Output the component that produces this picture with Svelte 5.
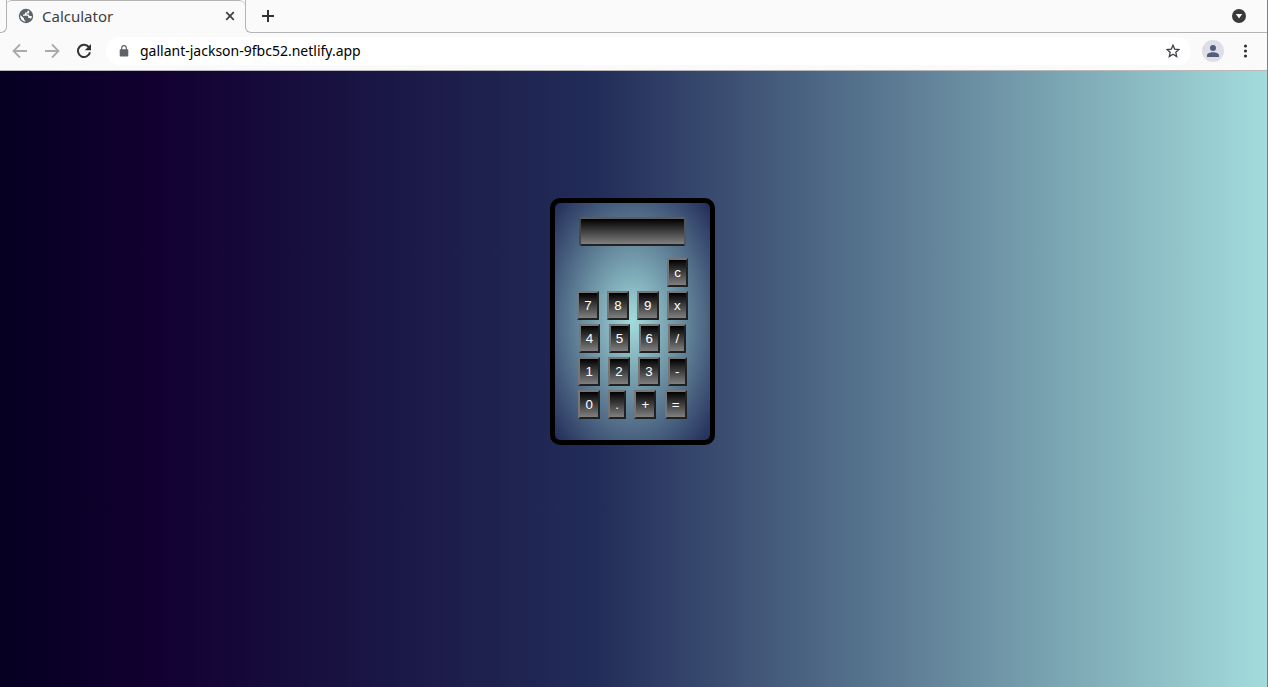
<script>
  const rows = [
    ['7', '8', '9', 'x'],
    ['4', '5', '6', '/'],
    ['1', '2', '3', '-'],
    ['0', '.', '+', '='],
  ];
  let display = $state('');
  let address = $state('gallant-jackson-9fbc52.netlify.app');

  function press(key) {
    if (key !== '=') {
      display += key;
      return;
    }
    const match = display.match(/^(-?[\d.]+)([x/+-])(-?[\d.]+)$/);
    if (!match) return;
    const a = Number(match[1]);
    const b = Number(match[3]);
    const results = { x: a * b, '/': a / b, '+': a + b, '-': a - b };
    display = String(results[match[2]]);
  }
</script>

<div class="window">
  <header>
    <div class="tabs">
      <div class="edge"></div>
      <div class="tab">
        <svg width="16" height="16" viewBox="0 0 16 16" aria-hidden="true">
          <circle cx="8" cy="8" r="7.2" fill="#5f6368" />
          <path d="M9.6 2.3 L9.6 3.2 C9.6 4 9 4.6 8.2 4.6 H7 V5.6 C7 6.2 6.6 6.5 6 6.5 H5 V7.8 H9 C9.8 7.8 10.2 8.3 10.2 9 V10 H11 C12 10 12.4 10.4 12.8 11 C13.6 10 13.9 9 13.9 8 H12 C11 8 10.9 7.2 10.9 6.5 H8.6 V5.6 H10 C11 5.6 11.3 5 11.3 3.2 Z M2.2 7 C1.9 9.8 3.6 13 7.3 13.7 V12.4 C6.5 12.4 6 11.8 6 11 V10.3 Z" fill="#fafafa" />
        </svg>
        <span class="title">Calculator</span>
        <button class="icon close" aria-label="Close tab">
          <svg width="10" height="10" viewBox="0 0 10 10"><path d="M1.2 1.2 L8.8 8.8 M8.8 1.2 L1.2 8.8" stroke="#3c4043" stroke-width="1.7" /></svg>
        </button>
      </div>
      <div class="strip">
        <button class="icon" aria-label="New tab">
          <svg width="12" height="12" viewBox="0 0 12 12"><path d="M6 0 V12 M0 6 H12" stroke="#323232" stroke-width="2" /></svg>
        </button>
        <button class="icon" aria-label="Search tabs">
          <svg width="14" height="14" viewBox="0 0 14 14"><circle cx="7" cy="7" r="7" fill="#3a3a3a" /><path d="M3.8 5 H10.2 L7 9.4 Z" fill="#fafafa" /></svg>
        </button>
      </div>
    </div>
    <div class="toolbar">
      <button class="icon" aria-label="Back">
        <svg width="16" height="16" viewBox="0 0 16 16"><path d="M15 8 H2 M8 1.5 L1.5 8 L8 14.5" fill="none" stroke="#ababab" stroke-width="1.8" /></svg>
      </button>
      <button class="icon" aria-label="Forward">
        <svg width="16" height="16" viewBox="0 0 16 16"><path d="M1 8 H14 M8 1.5 L14.5 8 L8 14.5" fill="none" stroke="#ababab" stroke-width="1.8" /></svg>
      </button>
      <button class="icon" aria-label="Reload">
        <svg width="16" height="16" viewBox="0 0 16 16"><path d="M13.2 4.6 A6.1 6.1 0 1 0 14 9.2" fill="none" stroke="#323232" stroke-width="2" /><path d="M15 1 V7.2 H8.8 Z" fill="#323232" /></svg>
      </button>
      <div class="omnibox">
        <svg width="10" height="12" viewBox="0 0 10 12" aria-hidden="true"><rect x="0.7" y="4.3" width="8.6" height="7.2" rx="0.8" fill="#5f6368" /><path d="M2.7 5 V3 A2.3 2.3 0 0 1 7.3 3 V5" fill="none" stroke="#5f6368" stroke-width="1.2" /></svg>
        <input class="address" aria-label="Address" bind:value={address} spellcheck="false" />
        <button class="icon" aria-label="Bookmark this page">
          <svg width="14" height="14" viewBox="0 0 14 14"><path d="M7 1.2 L8.7 5.1 L13 5.5 L9.8 8.3 L10.7 12.6 L7 10.3 L3.3 12.6 L4.2 8.3 L1 5.5 L5.3 5.1 Z" fill="none" stroke="#3f4347" stroke-width="1.3" /></svg>
        </button>
      </div>
      <button class="icon" aria-label="Profile">
        <svg width="22" height="22" viewBox="0 0 22 22"><circle cx="11" cy="11" r="11" fill="#dedfe6" /><circle cx="11" cy="8" r="3" fill="#545d7b" /><path d="M5 17 V15.2 C5 13.2 8.4 12.2 11 12.2 S17 13.2 17 15.2 V17 Z" fill="#545d7b" /></svg>
      </button>
      <button class="icon" aria-label="Menu">
        <svg width="10" height="14" viewBox="0 0 10 14"><circle cx="5.5" cy="2" r="1.6" fill="#323232" /><circle cx="5.5" cy="7" r="1.6" fill="#323232" /><circle cx="5.5" cy="12" r="1.6" fill="#323232" /></svg>
      </button>
    </div>
  </header>

  <main>
    <div class="calculator">
      <input class="display" aria-label="Display" readonly value={display} />
      <div class="keys">
        <div class="clear"><button class="key" onclick={() => (display = '')}>c</button></div>
        {#each rows as row}
          <div>
            {#each row as key}<button class="key" onclick={() => press(key)}>{key}</button>{' '}{/each}
          </div>
        {/each}
      </div>
    </div>
  </main>
</div>

<style>
  :global(body) {
    margin: 0;
  }
  .window {
    display: flex;
    flex-direction: column;
    min-height: 100vh;
    box-sizing: border-box;
    border-right: 1px solid #7b8080;
    font-family: 'Noto Sans', sans-serif;
  }
  header {
    background: #fafafa;
    border-bottom: 1px solid #b9b9b9;
  }
  .icon {
    display: flex;
    flex: none;
    padding: 0;
    border: 0;
    background: none;
  }
  .tabs {
    display: flex;
    height: 33px;
  }
  .edge {
    width: 7px;
    box-sizing: border-box;
    border-right: 1px solid #b4b4b4;
    border-bottom: 1px solid #b4b4b4;
    border-bottom-right-radius: 6px;
  }
  .tab {
    display: flex;
    align-items: center;
    gap: 8px;
    width: 239px;
    margin-left: -1px;
    padding: 0 10px 2px 12px;
    box-sizing: border-box;
    border-top: 1px solid #b4b4b4;
    border-radius: 6px 6px 0 0;
  }
  .title {
    flex: 1;
    font-size: 15px;
    line-height: 20px;
    color: #3c4043;
  }
  .strip {
    display: flex;
    flex: 1;
    align-items: center;
    justify-content: space-between;
    padding: 0 21px 0 16px;
    border-left: 1px solid #b4b4b4;
    border-bottom: 1px solid #b4b4b4;
    border-bottom-left-radius: 6px;
  }
  .toolbar {
    display: flex;
    align-items: center;
    gap: 16px;
    height: 36px;
    padding: 0 17px 1px 12px;
  }
  .omnibox {
    display: flex;
    flex: 1;
    align-items: center;
    height: 28px;
    margin: 0 -5px 0 -2px;
    padding: 0 11px 0 13px;
    border-radius: 14px;
    background: #fff;
  }
  .address {
    flex: 1;
    min-width: 0;
    margin-left: 11px;
    padding: 0 0 2px;
    border: 0;
    outline: 0;
    background: none;
    font: 14px 'Noto Sans', sans-serif;
    color: #000;
  }
  main {
    display: flex;
    flex: 1;
    align-items: flex-start;
    justify-content: center;
    padding: 127px 2px 20px 0;
    background: linear-gradient(to right, #060022, #120031 12.5%, #222c58 47%, #a3dcdc);
  }
  .calculator {
    display: flex;
    flex-direction: column;
    align-items: center;
    padding: 14px 20px 19px;
    border: 5px solid #000;
    border-radius: 10px;
    background: radial-gradient(#a3dcdc, #222c58);
  }
  .display {
    width: 107px;
    height: 29px;
    box-sizing: border-box;
    margin: 0 0 10px;
    padding: 0 4px;
    border: 2px solid;
    border-color: #5c5c5c #555 #222 #484848;
    border-radius: 3px;
    outline: 0;
    background: linear-gradient(#000, #808080);
    font: 13px 'Liberation Sans', Arial, sans-serif;
    color: #fff;
    text-align: right;
  }
  .keys {
    min-width: 115px;
    font: 16px 'Liberation Sans', Arial, sans-serif;
    text-align: center;
    white-space: nowrap;
  }
  .clear {
    text-align: right;
  }
  .key {
    margin: 2px;
    padding: 5px;
    border: 2px outset #767676;
    border-radius: 0;
    background: linear-gradient(#000, #808080);
    font-family: inherit;
    font-size: smaller;
    color: #fff;
  }
</style>
